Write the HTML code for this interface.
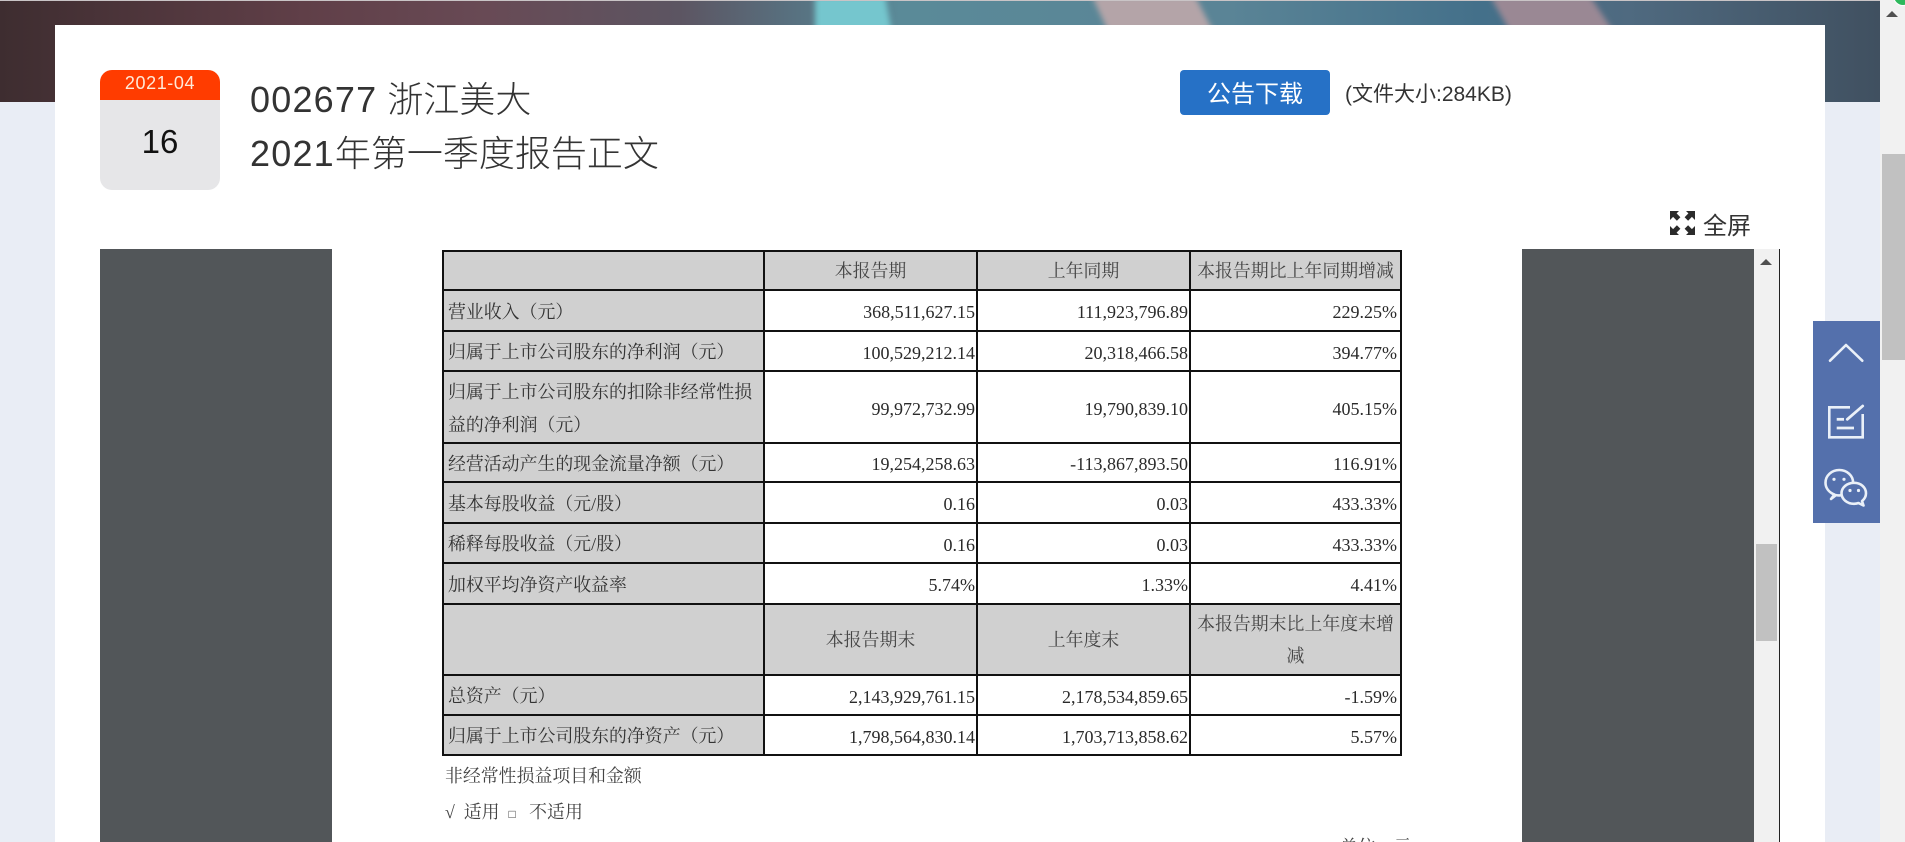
<!DOCTYPE html>
<html lang="zh-CN">
<head>
<meta charset="utf-8">
<title>002677 浙江美大 2021年第一季度报告正文</title>
<style>
html,body{margin:0;padding:0;width:1905px;height:842px;overflow:hidden;background:#e9edf5;}
body{position:relative;font-family:"Liberation Sans","Noto Sans CJK SC",sans-serif;color:#333;}
.abs{position:absolute;white-space:nowrap;}
#hero{position:absolute;left:0;top:1px;width:1880px;height:101px;overflow:hidden;background:linear-gradient(90deg,#3e2d30 0,#603f48 304px,#684a55 486px,#5c5562 680px,#58707f 790px,#5a8a98 900px,#5a8496 1228px,#44708a 1480px,#4f6a80 1628px,#405060 1880px);}
#topline{position:absolute;left:0;top:0;width:1880px;height:1px;background:#c9c4c6;}
#card{position:absolute;left:55px;top:25px;width:1770px;height:817px;background:#fff;}
#date{position:absolute;left:100px;top:70px;width:120px;height:120px;border-radius:12px;background:#e6e6e8;overflow:hidden;text-align:center;}
#date .m{height:30px;line-height:26px;background:#ff3c00;color:#ffe9d8;font-size:18px;letter-spacing:.6px;}
#date .d{line-height:84px;height:84px;font-size:33px;color:#111;}
#title{left:250px;top:73px;font-size:36px;line-height:54px;color:#333;font-weight:300;}
#title .n{letter-spacing:1.2px;}
#btn{left:1180px;top:70px;width:150px;height:45px;line-height:49px;background:#2671c6;color:#fff;border-radius:4px;text-align:center;font-size:24px;}
#size{left:1345px;top:80px;font-size:21px;line-height:30px;color:#333;}
#full{left:1703px;top:210px;font-size:24px;line-height:34px;color:#333;}
#viewer{position:absolute;left:100px;top:249px;width:1654px;height:593px;background:#525659;}
#page{position:absolute;left:332px;top:249px;width:1190px;height:593px;background:#fff;}
#vtrack{position:absolute;left:1754px;top:249px;width:25px;height:593px;background:#f1f1f1;}
#vthumb{position:absolute;left:1756px;top:544px;width:21px;height:97px;background:#c1c1c1;}
#vline{position:absolute;left:1779px;top:249px;width:1px;height:593px;background:#222;}
#strack{position:absolute;left:1880px;top:0;width:25px;height:842px;background:#f1f1f1;}
#sthumb{position:absolute;left:1882px;top:154px;width:23px;height:206px;background:#c1c1c1;}
.up{position:absolute;width:0;height:0;border-left:6px solid transparent;border-right:6px solid transparent;border-bottom:6px solid #505050;}
#panel{position:absolute;left:1813px;top:321px;width:67px;height:202px;background:#5470ac;}
#report{position:absolute;left:442px;top:250px;border-collapse:collapse;table-layout:fixed;width:960px;font-family:"Liberation Serif","Noto Serif CJK SC",serif;font-size:18px;color:#2a2a2a;filter:blur(.35px);}
#report td{border:2px solid #111;padding:3px 1px 0 0;text-align:right;vertical-align:middle;white-space:nowrap;line-height:22px;}
#report td.l{background:#d0d0d0;text-align:left;padding:3px 0 0 4px;font-size:17.9px;line-height:32.5px;color:#333;}
#report td.h{background:#d0d0d0;text-align:center;padding:0;font-size:17.9px;line-height:32px;color:#444;}
#report td.p{padding-right:3px;}
.note{position:absolute;font-family:"Liberation Serif","Noto Serif CJK SC",serif;font-size:17.9px;line-height:26px;color:#444;white-space:nowrap;filter:blur(.35px);}
</style>
</head>
<body>
<div id="topline"></div>
<div id="hero">
  <svg width="1880" height="101" viewBox="0 0 1880 101" style="display:block">
    <defs><filter id="b" x="-10%" y="-10%" width="120%" height="120%"><feGaussianBlur stdDeviation="3"/></filter></defs>
    <g filter="url(#b)">
      <polygon points="815,-5 885,-5 905,101 815,101" fill="#74c6ce"/>
      <polygon points="1092,-5 1195,-5 1250,101 1140,101" fill="#b4a4a8"/>
      <polygon points="1490,-5 1590,-5 1660,101 1550,101" fill="#9a8894"/>
    </g>
  </svg>
</div>
<div id="card"></div>

<div id="date"><div class="m">2021-04</div><div class="d">16</div></div>
<div id="title" class="abs"><span class="n">002677</span> 浙江美大<br><span class="n">2021</span>年第一季度报告正文</div>
<div id="btn" class="abs">公告下载</div>
<div id="size" class="abs">(文件大小:284KB)</div>

<svg class="abs" style="left:1670px;top:211px" width="25" height="24" viewBox="0 0 25 24">
  <g fill="#2b2b2b">
    <path d="M0 0H9L6.6 2.4 10.4 6.2 6.9 9.7 3.1 5.9 0 9Z"/>
    <path d="M25 0H16L18.4 2.4 14.6 6.2 18.1 9.7 21.9 5.9 25 9Z"/>
    <path d="M0 24H9L6.6 21.6 10.4 17.8 6.9 14.3 3.1 18.1 0 15Z"/>
    <path d="M25 24H16L18.4 21.6 14.6 17.8 18.1 14.3 21.9 18.1 25 15Z"/>
  </g>
</svg>
<div id="full" class="abs">全屏</div>

<div id="viewer"></div>
<div id="page"></div>
<div id="vtrack"></div>
<div class="up" style="left:1760px;top:259px"></div>
<div id="vthumb"></div>
<div id="vline"></div>

<table id="report">
  <colgroup><col style="width:321px"><col style="width:213px"><col style="width:213px"><col style="width:211px"></colgroup>
  <tr style="height:39px"><td class="h"></td><td class="h">本报告期</td><td class="h">上年同期</td><td class="h">本报告期比上年同期增减</td></tr>
  <tr style="height:41px"><td class="l">营业收入（元）</td><td>368,511,627.15</td><td>111,923,796.89</td><td class="p">229.25%</td></tr>
  <tr style="height:40px"><td class="l">归属于上市公司股东的净利润（元）</td><td>100,529,212.14</td><td>20,318,466.58</td><td class="p">394.77%</td></tr>
  <tr style="height:72px"><td class="l">归属于上市公司股东的扣除非经常性损<br>益的净利润（元）</td><td>99,972,732.99</td><td>19,790,839.10</td><td class="p">405.15%</td></tr>
  <tr style="height:39px"><td class="l">经营活动产生的现金流量净额（元）</td><td>19,254,258.63</td><td>-113,867,893.50</td><td class="p">116.91%</td></tr>
  <tr style="height:41px"><td class="l">基本每股收益（元/股）</td><td>0.16</td><td>0.03</td><td class="p">433.33%</td></tr>
  <tr style="height:40px"><td class="l">稀释每股收益（元/股）</td><td>0.16</td><td>0.03</td><td class="p">433.33%</td></tr>
  <tr style="height:41px"><td class="l">加权平均净资产收益率</td><td>5.74%</td><td>1.33%</td><td class="p">4.41%</td></tr>
  <tr style="height:71px"><td class="h"></td><td class="h">本报告期末</td><td class="h">上年度末</td><td class="h">本报告期末比上年度末增<br>减</td></tr>
  <tr style="height:40px"><td class="l">总资产（元）</td><td>2,143,929,761.15</td><td>2,178,534,859.65</td><td class="p">-1.59%</td></tr>
  <tr style="height:40px"><td class="l">归属于上市公司股东的净资产（元）</td><td>1,798,564,830.14</td><td>1,703,713,858.62</td><td class="p">5.57%</td></tr>
</table>

<div class="note" style="left:445px;top:763px">非经常性损益项目和金额</div>
<div class="note" style="left:445px;top:799px">√&nbsp;&nbsp;适用&nbsp;&nbsp;<span style="font-size:12px">□</span>&nbsp;&nbsp;&nbsp;不适用</div>
<div class="note" style="left:1340px;top:834px">单位：元</div>

<div id="strack"></div>
<div class="up" style="left:1886px;top:11px"></div>
<div id="sthumb"></div>
<div class="abs" style="left:1893px;top:-14px;width:18px;height:18px;border-radius:50%;background:#2eb85c;border:1px solid #fff"></div>

<div id="panel">
  <svg width="67" height="202" viewBox="0 0 67 202" fill="none" stroke="#eaf0f8" stroke-width="2.6">
    <path d="M17 39.7 33 24 49.3 39.7" stroke-linecap="round" stroke-linejoin="round"/>
    <path d="M37 86.3H16.3V116.3H49.7V93"/>
    <path d="M34.3 98.3 49.7 85" stroke-linecap="round" stroke-width="2.8"/>
    <path d="M23.7 98.3H31" stroke-width="2.8"/>
    <path d="M23.7 107H41" stroke-width="2.8"/>
    <path d="M21.5 173.6C15.8 171.2 12.5 166.8 12.5 161.7 12.5 154.5 18.7 149 26.3 149 33.9 149 40.1 154.5 40.1 161.7 40.1 168.9 33.9 174.4 26.3 174.4 25.2 174.4 24.1 174.3 23 174.1L18 178 Z" stroke-linejoin="round"/>
    <path d="M45.5 182C44.2 182.5 42.6 182.8 41 182.8 34.1 182.8 28.5 178.1 28.5 172.3 28.5 166.5 34.1 161.8 41 161.8 47.9 161.8 53 166.5 53 172.3 53 175.4 51.5 178.1 49 180.1L50.5 184.5 Z" fill="#5470ac" stroke-linejoin="round"/>
    <g fill="#eaf0f8" stroke="none">
      <circle cx="21" cy="158.3" r="1.6"/><circle cx="31" cy="158.3" r="1.6"/>
      <circle cx="37" cy="169.5" r="1.6"/><circle cx="45.5" cy="169.5" r="1.6"/>
    </g>
  </svg>
</div>
</body>
</html>
